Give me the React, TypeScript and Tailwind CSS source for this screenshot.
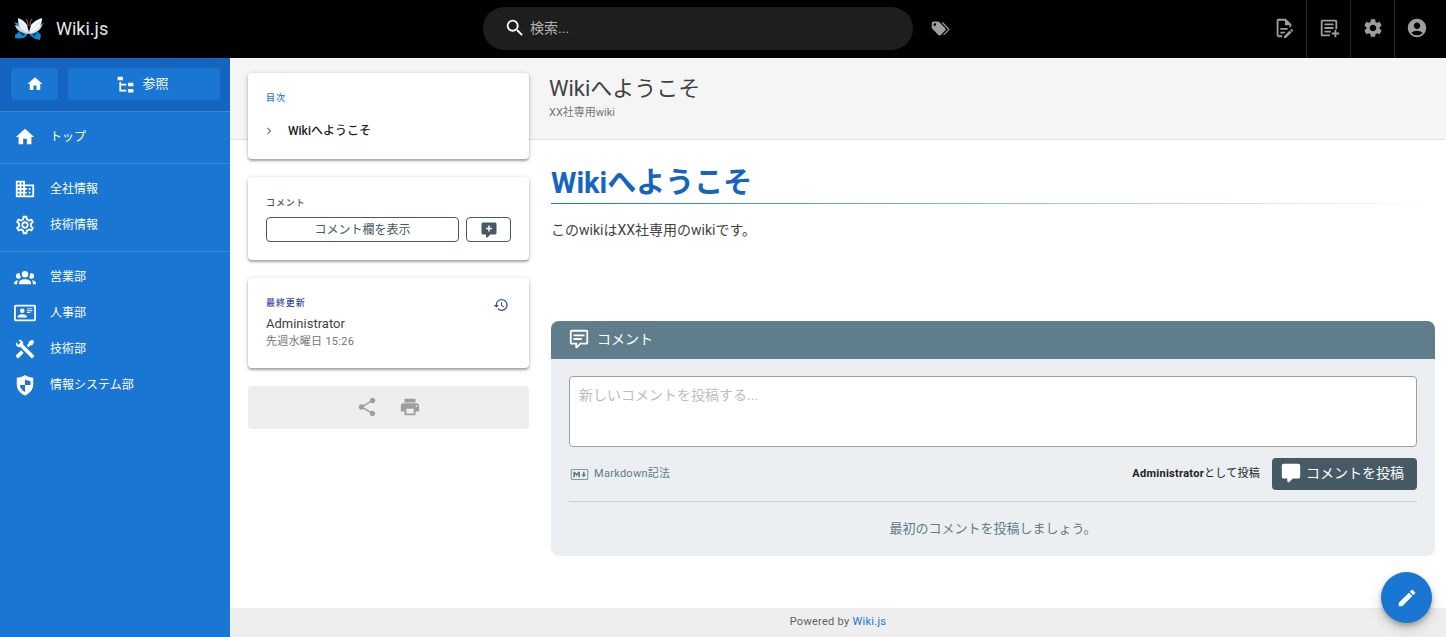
import type { ReactNode } from "react"
import { MdAccountCircle, MdChevronRight, MdDomain, MdEdit, MdHistory, MdHome, MdOutlineSettings, MdPrint, MdSearch, MdSettings, MdShare } from "react-icons/md"

const paths = {
    tree: "M3,3H9V7H3V3M15,10H21V14H15V10M15,17H21V21H15V17M13,13H7V18H13V20H7L5,20V9H7V11H13V13Z",
    tags: "M5.5,9A1.5,1.5 0 0,0 7,7.5A1.5,1.5 0 0,0 5.5,6A1.5,1.5 0 0,0 4,7.5A1.5,1.5 0 0,0 5.5,9M17.41,11.58C17.77,11.94 18,12.44 18,13C18,13.55 17.78,14.05 17.41,14.41L12.41,19.41C12.05,19.77 11.55,20 11,20C10.45,20 9.95,19.78 9.58,19.41L2.59,12.42C2.22,12.05 2,11.55 2,11V6C2,4.89 2.89,4 4,4H9C9.55,4 10.05,4.22 10.41,4.58L17.41,11.58M13.54,5.71L14.54,4.71L21.41,11.58C21.78,11.94 22,12.45 22,13C22,13.55 21.78,14.05 21.42,14.41L16.04,19.79L15.04,18.79L20.75,13L13.54,5.71Z",
    fileEdit: "M8,12H16V14H8V12M10,20H6V4H13V9H18V12.1L20,10.1V8L14,2H6A2,2 0 0,0 4,4V20A2,2 0 0,0 6,22H10V20M8,18H12.1L13,17.1V16H8V18M20.2,13C20.3,13 20.5,13.1 20.6,13.2L21.9,14.5C22.1,14.7 22.1,15.1 21.9,15.3L20.9,16.3L18.8,14.2L19.8,13.2C19.9,13.1 20,13 20.2,13M20.2,16.9L14.1,23H12V20.9L18.1,14.8L20.2,16.9Z",
    pageAdd: "M5,3H19A2,2 0 0,1 21,5V13H19V5H5V19H13V21H5A2,2 0 0,1 3,19V5A2,2 0 0,1 5,3M7,7H17V9H7V7M7,11H17V13H7V11M7,15H14V17H7V15M18,14H20V17H23V19H20V22H18V19H15V17H18V14Z",
    group: "M12,5.5A3.5,3.5 0 0,1 15.5,9A3.5,3.5 0 0,1 12,12.5A3.5,3.5 0 0,1 8.5,9A3.5,3.5 0 0,1 12,5.5M5,8C5.56,8 6.08,8.15 6.53,8.42C6.38,9.85 6.8,11.27 7.66,12.38C7.16,13.34 6.16,14 5,14A3,3 0 0,1 2,11A3,3 0 0,1 5,8M19,8A3,3 0 0,1 22,11A3,3 0 0,1 19,14C17.84,14 16.84,13.34 16.34,12.38C17.2,11.27 17.62,9.85 17.47,8.42C17.92,8.15 18.44,8 19,8M5.5,18.25C5.5,16.18 8.41,14.5 12,14.5C15.59,14.5 18.5,16.18 18.5,18.25V20H5.5V18.25M0,20V18.5C0,17.11 1.89,15.94 4.45,15.6C3.86,16.28 3.5,17.22 3.5,18.25V20H0M24,20H20.5V18.25C20.5,17.22 20.14,16.28 19.55,15.6C22.11,15.94 24,17.11 24,18.5V20Z",
    idCard: "M22,3H2C0.91,3.04 0.04,3.91 0,5V19C0.04,20.09 0.91,20.96 2,21H22C23.09,20.96 23.96,20.09 24,19V5C23.96,3.91 23.09,3.04 22,3M22,19H2V5H22V19M14,17V15.75C14,14.09 10.66,13.25 9,13.25C7.34,13.25 4,14.09 4,15.75V17H14M9,7A2.5,2.5 0 0,0 6.5,9.5A2.5,2.5 0 0,0 9,12A2.5,2.5 0 0,0 11.5,9.5A2.5,2.5 0 0,0 9,7M14,7V8H20V7H14M14,9V10H20V9H14M14,11V12H18V11H14",
    tools: "M21.71 20.29L20.29 21.71A1 1 0 0 1 18.88 21.71L7 9.85A3.81 3.81 0 0 1 6 10A4 4 0 0 1 2.22 4.7L4.76 7.24L5.29 6.71L6.71 5.29L7.24 4.76L4.7 2.22A4 4 0 0 1 10 6A3.81 3.81 0 0 1 9.85 7L21.71 18.88A1 1 0 0 1 21.71 20.29M2.29 18.88A1 1 0 0 0 2.29 20.29L3.71 21.71A1 1 0 0 0 5.12 21.71L10.59 16.25L7.76 13.42M20 2L16 4V6L13.83 8.17L15.83 10.17L18 8H20L22 4Z",
    shield: "M12,1C9,3 6,4 3,4V11C3,16.55 6.5,21.5 12,23.5C17.5,21.5 21,16.55 21,11V4C18,4 15,3 12,1M12,6C14,7 16,7.5 18,7.6V12H12V6M12,12V19.5C8.8,18 6.8,15.5 6.3,12H12Z",
    comment: "M9,22A1,1 0 0,1 8,21V18H4A2,2 0 0,1 2,16V4C2,2.89 2.9,2 4,2H20A2,2 0 0,1 22,4V16A2,2 0 0,1 20,18H13.9L10.2,21.71C10,21.9 9.75,22 9.5,22V22H9Z",
    commentPlus: "M9,22A1,1 0 0,1 8,21V18H4A2,2 0 0,1 2,16V4C2,2.89 2.9,2 4,2H20A2,2 0 0,1 22,4V16A2,2 0 0,1 20,18H13.9L10.2,21.71C10,21.9 9.75,22 9.5,22V22H9ZM11,6V9H8V11H11V14H13V11H16V9H13V6Z",
    commentText: "M9,22A1,1 0 0,1 8,21V18H4A2,2 0 0,1 2,16V4C2,2.89 2.9,2 4,2H20A2,2 0 0,1 22,4V16A2,2 0 0,1 20,18H13.9L10.2,21.71C10,21.9 9.75,22 9.5,22V22H9M10,16V19.08L13.08,16H20V4H4V16H10M6,7H18V9H6V7M6,11H15V13H6V11Z",
    markdown: "M20.56 18H3.44C2.65 18 2 17.37 2 16.59V7.41C2 6.63 2.65 6 3.44 6H20.56C21.35 6 22 6.63 22 7.41V16.59C22 17.37 21.35 18 20.56 18M3.44 6.94C3.18 6.94 2.96 7.15 2.96 7.41V16.6C2.96 16.85 3.18 17.06 3.44 17.06H20.56C20.82 17.06 21.04 16.85 21.04 16.6V7.41C21.04 7.15 20.82 6.94 20.56 6.94H3.44M4.89 15.19V8.81H6.81L8.73 11.16L10.65 8.81H12.58V15.19H10.65V11.53L8.73 13.88L6.81 11.53V15.19H4.89M16.9 15.19L14 12.09H15.94V8.81H17.86V12.09H19.79L16.9 15.19",
}

function Icon({ name, size = 22 }: { name: keyof typeof paths; size?: number }) {
    return (
        <svg width={size} height={size} viewBox="0 0 24 24" fill="currentColor" fillRule="evenodd" className="shrink-0" aria-hidden="true">
            <path d={paths[name]} />
        </svg>
    )
}

function Logo() {
    return (
        <svg width="30" height="24" viewBox="0 0 30 24" className="shrink-0" aria-hidden="true">
            <path d="M0 5L7 7L10 13L4 10Z" fill="#139bd8" />
            <path d="M30 6L23 8L20 13L27 10Z" fill="#139bd8" />
            <path d="M14 14L6 14L1 18V21Q10 23 13 18Z" fill="#0a8ad2" />
            <path d="M16 14L23 14L27 18L26 23Q19 22 16 18Z" fill="#0a8ad2" />
            <path d="M12 15L5 15L9 19Z" fill="#0c3a6e" />
            <path d="M17 15L24 16L20 20Z" fill="#0c4a8a" />
            <path d="M1 8Q2 13 7 15Q11 17 15 17L14 12Z" fill="#c9d2e3" />
            <path d="M28 8Q27 13 22 15Q19 17 15 17L16 12Z" fill="#dbe1ec" />
            <path d="M4 1Q10 3 13 8L15 16Q9 14 6 10Q4 7 4 1Z" fill="#edf0f6" />
            <path d="M28 1Q21 3 17 8L15 16Q21 15 25 10Q28 7 28 1Z" fill="#fafbfd" />
            <path d="M6 5Q10 9 15 16M26 5Q20 9 15 16" stroke="#c0cadb" strokeWidth="0.6" fill="none" />
            <path d="M14 9Q14 3 12 2M16 9Q16 3 18 2" stroke="#77716b" fill="none" />
        </svg>
    )
}

const navGroups: { label: string; icon: ReactNode }[][] = [
    [{ label: "トップ", icon: <MdHome size={22} /> }],
    [
        { label: "全社情報", icon: <MdDomain size={22} /> },
        { label: "技術情報", icon: <MdOutlineSettings size={22} /> },
    ],
    [
        { label: "営業部", icon: <Icon name="group" /> },
        { label: "人事部", icon: <Icon name="idCard" /> },
        { label: "技術部", icon: <Icon name="tools" /> },
        { label: "情報システム部", icon: <Icon name="shield" /> },
    ],
]

const headerActions: { label: string; icon: ReactNode }[] = [
    { label: "ページを編集", icon: <Icon name="fileEdit" /> },
    { label: "新規ページ", icon: <Icon name="pageAdd" /> },
    { label: "管理", icon: <MdSettings size={22} /> },
    { label: "アカウント", icon: <MdAccountCircle size={22} /> },
]

function Header() {
    return (
        <header className="grid grid-cols-3 h-[58px] bg-black text-[#9e9e9e]">
            <a href="#" className="flex items-center gap-3 pl-3.5 text-lg text-gray-200">
                <Logo />
                Wiki.js
            </a>
            <div className="flex items-center gap-4 pb-0.5 pl-px">
                <label className="flex flex-1 items-center gap-1 h-[43px] rounded-full bg-[#1e1e1e] pl-[21px] pr-6">
                    <MdSearch size={22} className="shrink-0 text-white" />
                    <input type="text" aria-label="検索" placeholder="検索..." className="w-full bg-transparent text-sm text-white outline-none placeholder:text-[#b3b3b3]" />
                </label>
                <button aria-label="タグ" className="mr-3 p-px"><Icon name="tags" size={21} /></button>
            </div>
            <div className="flex justify-end pr-2">
                {headerActions.map((a, i) => (
                    <button key={a.label} aria-label={a.label} className={i > 0 ? "flex w-11 items-center justify-center border-l border-[#272727] pb-0.5" : "flex w-11 items-center justify-center pb-0.5"}>
                        {a.icon}
                    </button>
                ))}
            </div>
        </header>
    )
}

function Sidebar() {
    return (
        <aside className="w-[230px] shrink-0 bg-[#1976d2] text-white">
            <div className="flex gap-2.5 bg-[#1565c0] pt-2.5 pr-2.5 pb-[11px] pl-[11px]">
                <button aria-label="ホーム" className="flex h-8 w-[47px] items-center justify-center rounded bg-[#1976d2]"><MdHome size={18} /></button>
                <button className="flex h-8 flex-1 items-center justify-center gap-1.5 rounded bg-[#1976d2] pr-1 text-[13px]">
                    <Icon name="tree" size={21} />
                    参照
                </button>
            </div>
            <nav>
                {navGroups.map((group, i) => (
                    <ul key={i} className="border-t border-[#3a8ada] pt-[7px] pb-2">
                        {group.map((item) => (
                            <li key={item.label}>
                                <a href="#" className="flex h-9 items-center gap-3.5 pl-3.5 text-xs">
                                    {item.icon}
                                    {item.label}
                                </a>
                            </li>
                        ))}
                    </ul>
                ))}
            </nav>
        </aside>
    )
}

const card = "rounded bg-white px-[18px] shadow-[0_2px_2px_rgba(0,0,0,0.25),0_1px_5px_rgba(0,0,0,0.2)]"

function SideCards() {
    return (
        <div className="-mt-[67px] ml-[18px] flex w-[281px] shrink-0 flex-col gap-[18px]">
            <section className={`${card} h-[86px] pt-[17px]`}>
                <h2 className="text-[9px] leading-4 font-medium tracking-widest text-[#1976d2]">目次</h2>
                <a href="#welcome" className="mt-[15px] flex items-center gap-3 text-xs leading-5 font-medium text-[#212121]">
                    <MdChevronRight size={14} className="-ml-1 text-[#757575]" />
                    Wikiへようこそ
                </a>
            </section>
            <section className={`${card} h-[83px] pt-[18px]`}>
                <h2 className="text-[9px] leading-4 font-medium tracking-widest text-[#455a64]">コメント</h2>
                <div className="mt-1.5 flex gap-[7px] text-[#455a64]">
                    <button className="h-[25px] flex-1 rounded border border-[#455a64] text-xs">コメント欄を表示</button>
                    <button aria-label="コメントを追加" className="flex h-[25px] w-[45px] items-center justify-center rounded border border-[#455a64]"><Icon name="commentPlus" size={18} /></button>
                </div>
            </section>
            <section className={`${card} flex h-[90px] justify-between pt-[17px]`}>
                <div>
                    <h2 className="text-[9px] leading-4 font-medium tracking-widest text-[#3949ab]">最終更新</h2>
                    <p className="mt-[3px] text-[13px] leading-5 text-[#424242]">Administrator</p>
                    <p className="text-[11px] leading-4 tracking-wide text-[#757575]">先週水曜日 15:26</p>
                </div>
                <button aria-label="履歴" className="mt-0.5 mr-0.5 h-4 text-[#3949ab]"><MdHistory size={16} /></button>
            </section>
            <div className="flex h-[43px] items-center justify-center gap-[21px] rounded bg-[#eeeeee] pb-0.5 text-[#9e9e9e]">
                <button aria-label="共有"><MdShare size={22} /></button>
                <button aria-label="印刷"><MdPrint size={22} /></button>
            </div>
        </div>
    )
}

function Comments() {
    return (
        <section className="mt-[81px] overflow-hidden rounded-lg bg-[#eceff1]">
            <h2 className="flex h-[38px] items-center gap-[7px] bg-[#607d8b] px-[17px] pb-0.5 text-sm text-white">
                <Icon name="commentText" />
                コメント
            </h2>
            <div className="px-[18px] pt-[17px]">
                <textarea aria-label="コメント" placeholder="新しいコメントを投稿する..." className="block h-[71px] w-full resize-none rounded border border-[#9e9e9e] bg-white px-[9px] py-2 text-sm outline-none placeholder:text-[#bdbdbd]" />
                <div className="mt-[11px] flex items-center border-b border-[#cbd0d3] pb-[11px]">
                    <a href="#" className="flex items-center gap-1 text-[11px] tracking-wide text-[#607d8b]">
                        <Icon name="markdown" size={21} />
                        Markdown記法
                    </a>
                    <span className="ml-auto text-[11px] tracking-wide text-[#212121]"><b>Administrator</b>として投稿</span>
                    <button className="ml-3 flex h-8 items-center gap-1 rounded bg-[#455a64] pr-[13px] pb-0.5 pl-2 text-sm text-white">
                        <Icon name="comment" />
                        コメントを投稿
                    </button>
                </div>
                <p className="py-[17px] text-center text-[13px] leading-5 text-[#607d8b]">最初のコメントを投稿しましょう。</p>
            </div>
        </section>
    )
}

function App() {
    return (
        <div className="flex min-h-screen flex-col bg-white font-[Roboto,'Noto_Sans_CJK_JP',sans-serif]">
            <Header />
            <div className="flex flex-1">
                <Sidebar />
                <main className="flex min-w-0 flex-1 flex-col">
                    <div className="h-[82px] border-b border-[#e0e0e0] bg-[#f5f5f5] pt-[17px] pl-[319px]">
                        <h1 className="text-[22px] leading-7 text-[#424242]">Wikiへようこそ</h1>
                        <p className="text-[11px] leading-5 text-[#757575]">XX社専用wiki</p>
                    </div>
                    <div className="flex flex-1 gap-[22px] pr-[11px]">
                        <SideCards />
                        <article className="min-w-0 flex-1 pt-[23px]">
                            <h1 id="welcome" className="text-[29px] leading-10 font-bold text-[#1565c0]">Wikiへようこそ</h1>
                            <div className="h-px bg-linear-to-r from-[#1976d2] to-[#1976d2]/0" />
                            <p className="mt-4 text-sm leading-5 text-[#424242]">このwikiはXX社専用のwikiです。</p>
                            <Comments />
                        </article>
                    </div>
                    <footer className="flex h-[29px] items-center justify-center gap-[3px] bg-[#eeeeee] text-[11px] tracking-wide text-[#616161]">
                        Powered by
                        <a href="#" className="text-[#1976d2]">Wiki.js</a>
                    </footer>
                </main>
            </div>
            <button aria-label="編集" className="fixed right-3.5 bottom-3.5 flex size-[51px] items-center justify-center rounded-full bg-[#1976d2] text-white shadow-[0_3px_5px_rgba(0,0,0,0.25),0_6px_14px_rgba(0,0,0,0.16)]">
                <MdEdit size={22} />
            </button>
        </div>
    )
}

export default App
